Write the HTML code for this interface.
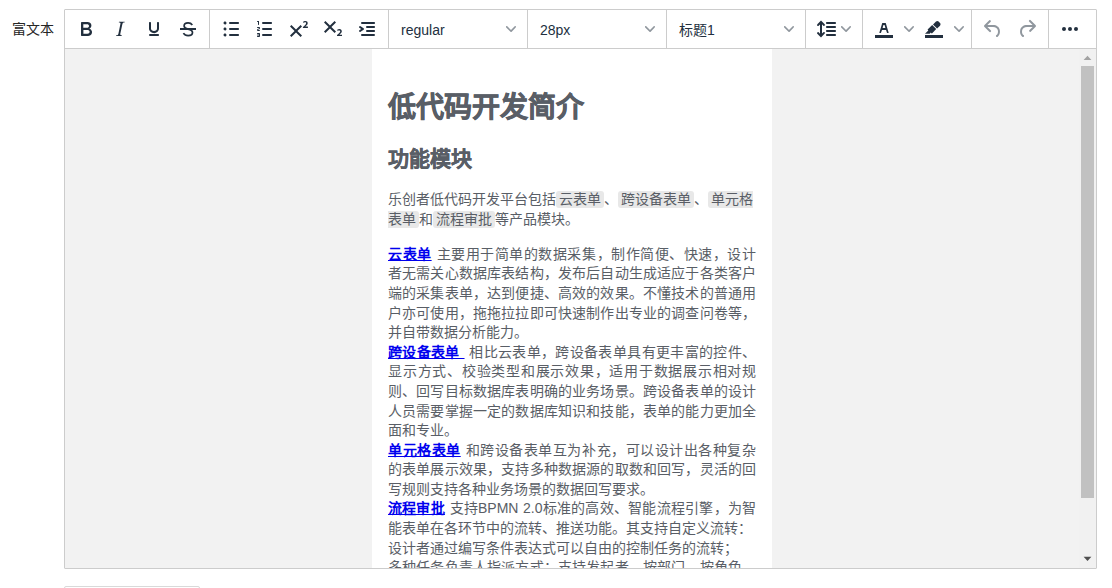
<!DOCTYPE html>
<html lang="zh-CN">
<head>
<meta charset="utf-8">
<style>
*{box-sizing:border-box;}
html,body{margin:0;padding:0;background:#fff;width:1112px;height:588px;overflow:hidden;font-family:"Liberation Sans",sans-serif;}
.label{position:absolute;left:12px;top:20px;font-size:14px;color:#262626;line-height:18px;}
.ed{position:absolute;left:64px;top:9px;width:1033px;height:560px;border:1px solid #ccc;border-radius:1px;overflow:hidden;}
.tb{position:absolute;left:0;top:0;height:39px;width:1031px;border-bottom:1px solid #ccc;background:#fff;display:flex;}
.grp{display:flex;padding:0 4px;border-right:1px solid #ccc;height:39px;}
.grp.last{border-right:0;}
.btn{width:34px;height:34px;margin:2px 0 3px 0;display:flex;align-items:center;justify-content:center;}
.btn svg{width:24px;height:24px;fill:#222f3e;display:block;}
.btn.dis svg{fill:rgba(34,47,62,.5);}
.sel{width:130px;height:34px;margin:2px 0 3px;padding:0 4px;display:flex;align-items:center;}
.sel .lab{width:98px;margin:0 4px;position:relative;top:1px;font-size:14px;color:#222f3e;white-space:nowrap;line-height:34px;}
.chev{width:16px;height:34px;display:flex;align-items:center;justify-content:center;}
.chev svg{width:10px;height:10px;fill:rgba(34,47,62,.5);display:block;}
.lh{width:48px;height:34px;margin:2px 0 3px;padding:0 4px;display:flex;align-items:center;}
.lh svg.ic{width:24px;height:24px;fill:#222f3e;display:block;}
.split{display:flex;width:50px;height:34px;margin:2px 0 3px;}
.split .main{width:34px;height:34px;display:flex;align-items:center;justify-content:center;}
.split .main svg{width:24px;height:24px;fill:#222f3e;display:block;}
.frame{position:absolute;left:0;top:39px;width:1031px;height:519px;background:#f2f2f2;overflow:hidden;}
.page{position:absolute;left:307px;top:0;width:400px;height:2000px;background:#fff;padding:16px;font-size:14px;line-height:1.4;color:#595e66;text-align:justify;word-spacing:0.5px;}
.page h1{font-size:28px;margin:23px 0 0;font-weight:bold;-webkit-text-stroke:0.6px #595e66;}
.page h2{font-size:21px;margin:16.4px 0 16.6px;font-weight:bold;-webkit-text-stroke:0.4px #595e66;}
.page p{margin:14px 0;}
.page code{font-family:"Liberation Mono",monospace;background:#e8e8e8;border-radius:3px;padding:1px 3px 0;font-size:14px;}
.page a{color:#0000ee;text-decoration:underline;}
.sb{position:absolute;left:1014px;top:0;width:17px;height:519px;background:#f1f1f1;}
.thumb{position:absolute;left:2px;top:17px;width:13px;height:432px;background:#c1c1c1;}
.up{position:absolute;left:5px;top:7px;width:0;height:0;border-left:3.5px solid transparent;border-right:3.5px solid transparent;border-bottom:4px solid #a3a3a3;}
.down{position:absolute;left:5px;top:508px;width:0;height:0;border-left:3.5px solid transparent;border-right:3.5px solid transparent;border-top:4px solid #505050;}
.bottombox{position:absolute;left:64px;top:586px;width:136px;height:20px;border:1px solid #d9d9d9;border-radius:2px;}
</style>
</head>
<body>
<div class="label">富文本</div>
<div class="ed">
  <div class="tb">
    <div class="grp">
      <div class="btn"><svg viewBox="0 0 24 24"><path d="M7.8 19c-.3 0-.5 0-.6-.2l-.2-.5V5.7c0-.2 0-.4.2-.5l.6-.2h5c1.5 0 2.7.3 3.5 1 .7.6 1.1 1.4 1.1 2.5a3 3 0 0 1-.6 1.9c-.4.6-1 1-1.6 1.2.4.1.9.3 1.3.6s.8.7 1 1.2c.4.4.5 1 .5 1.6 0 1.3-.4 2.3-1.3 3-.8.7-2.1 1-3.8 1H7.8zm5-8.3c.6 0 1.2-.1 1.6-.5.4-.3.6-.7.6-1.3 0-1.1-.8-1.7-2.3-1.7H9.3v3.5h3.4zm.5 6c.7 0 1.3-.1 1.7-.4.4-.4.6-.9.6-1.5s-.2-1-.7-1.4c-.4-.3-1-.4-2-.4H9.4v3.8h4z" fill-rule="evenodd"/></svg></div>
      <div class="btn"><svg viewBox="0 0 24 24"><path d="M16.7 4.7l-.1.9h-.3c-.6 0-1 0-1.4.3-.3.3-.4.6-.5 1.1l-2.1 9.8v.6c0 .5.4.8 1.4.8h.2l-.2.8H8l.2-.8h.2c1.1 0 1.8-.5 2-1.5l2-9.8.1-.5c0-.6-.4-.8-1.4-.8h-.3l.2-.9h5.8z" fill-rule="evenodd"/></svg></div>
      <div class="btn"><svg viewBox="0 0 24 24"><path d="M16 5c.6 0 1 .4 1 1v5.5a4 4 0 0 1-.4 1.8l-1 1.4a5.3 5.3 0 0 1-5.5 1 5 5 0 0 1-1.6-1c-.5-.4-.8-.9-1.1-1.4a4 4 0 0 1-.4-1.8V6c0-.6.4-1 1-1s1 .4 1 1v5.5c0 .3 0 .6.2 1l.6.7a3.3 3.3 0 0 0 2.2.8 3.4 3.4 0 0 0 2.2-.8c.3-.2.4-.5.6-.8l.2-.9V6c0-.6.4-1 1-1zM8 17h8c.6 0 1 .4 1 1s-.4 1-1 1H8a1 1 0 0 1 0-2z" fill-rule="evenodd"/></svg></div>
      <div class="btn"><svg viewBox="0 0 24 24"><path d="M16.3 8C15.4 6.6 13.9 5.9 12.1 5.9 9.7 5.9 8.1 7.2 8.1 9 8.1 11 10 11.6 12.1 12.1 14.6 12.7 16.5 13.6 16.5 15.5 16.5 17.4 14.6 18.6 12.1 18.6 10 18.6 8.4 17.7 7.4 16.1" fill="none" stroke="#222f3e" stroke-width="1.7"/><path d="M4 11h16v2H4z"/></svg></div>
    </div>
    <div class="grp">
      <div class="btn"><svg viewBox="0 0 24 24"><path d="M11 5h8c.6 0 1 .4 1 1s-.4 1-1 1h-8a1 1 0 0 1 0-2zm0 6h8c.6 0 1 .4 1 1s-.4 1-1 1h-8a1 1 0 0 1 0-2zm0 6h8c.6 0 1 .4 1 1s-.4 1-1 1h-8a1 1 0 0 1 0-2zM4.5 6c0-.4.1-.8.4-1 .3-.4.7-.5 1.1-.5.4 0 .8.1 1 .4.4.3.5.7.5 1.1 0 .4-.1.8-.4 1-.3.4-.7.5-1.1.5-.4 0-.8-.1-1-.4-.4-.3-.5-.7-.5-1.1zm0 6c0-.4.1-.8.4-1 .3-.4.7-.5 1.1-.5.4 0 .8.1 1 .4.4.3.5.7.5 1.1 0 .4-.1.8-.4 1-.3.4-.7.5-1.1.5-.4 0-.8-.1-1-.4-.4-.3-.5-.7-.5-1.1zm0 6c0-.4.1-.8.4-1 .3-.4.7-.5 1.1-.5.4 0 .8.1 1 .4.4.3.5.7.5 1.1 0 .4-.1.8-.4 1-.3.4-.7.5-1.1.5-.4 0-.8-.1-1-.4-.4-.3-.5-.7-.5-1.1z" fill-rule="evenodd"/></svg></div>
      <div class="btn"><svg viewBox="0 0 24 24"><path d="M10 17h8c.6 0 1 .4 1 1s-.4 1-1 1h-8a1 1 0 0 1 0-2zm0-6h8c.6 0 1 .4 1 1s-.4 1-1 1h-8a1 1 0 0 1 0-2zm0-6h8c.6 0 1 .4 1 1s-.4 1-1 1h-8a1 1 0 1 1 0-2zM6 4v3.5c0 .3-.2.5-.5.5a.5.5 0 0 1-.5-.5V5h-.5a.5.5 0 0 1 0-1H6zm-1 8.8l.2.2h1.3c.3 0 .5.2.5.5s-.2.5-.5.5H4.9a1 1 0 0 1-.9-1V13c0-.4.3-.8.6-1l1.2-.4.2-.3a.2.2 0 0 0-.2-.2H4.5a.5.5 0 0 1-.5-.5c0-.3.2-.5.5-.5h1.6c.5 0 .9.4.9 1v.1c0 .4-.3.8-.6 1l-1.2.4-.2.3zM7 17v2c0 .6-.4 1-1 1H4.5a.5.5 0 0 1 0-1h1.2c.2 0 .3-.1.3-.3 0-.2-.1-.3-.3-.3H4.4a.4.4 0 1 1 0-.8h1.3c.2 0 .3-.1.3-.3 0-.2-.1-.3-.3-.3H4.5a.5.5 0 1 1 0-1H6c.6 0 1 .4 1 1z" fill-rule="evenodd"/></svg></div>
      <div class="btn"><svg viewBox="0 0 24 24"><path d="M15 9.4L10.4 14l4.6 4.6-1.4 1.4L9 15.4 4.4 20 3 18.6 7.6 14 3 9.4 4.4 8 9 12.6 13.6 8 15 9.4zm5.9 1.6h-5v-1l1-.8 1.7-1.6c.3-.5.5-.9.5-1.3 0-.3 0-.5-.2-.7-.2-.2-.5-.3-.9-.3l-.8.2-.7.4-.4-1.2c.2-.2.5-.4 1-.5.3-.2.8-.2 1.2-.2.8 0 1.4.2 1.8.6.4.4.6 1 .6 1.6 0 .5-.2 1-.5 1.5l-1.3 1.4-.6.5h2.6V11z"/></svg></div>
      <div class="btn"><svg viewBox="0 0 24 24"><path d="M10.4 10l4.6 4.6-1.4 1.4L9 11.4 4.4 16 3 14.6 7.6 10 3 5.4 4.4 4 9 8.6 13.6 4 15 5.4 10.4 10zM21 19h-5v-1l1-.8 1.7-1.6c.3-.4.5-.8.5-1.2 0-.3 0-.6-.2-.7-.2-.2-.5-.3-1-.3l-.7.1-.7.4-.4-1.1 1-.6 1.2-.2c.8 0 1.4.3 1.8.7.4.4.6.9.6 1.5 0 .5-.1 1-.5 1.5l-1.2 1.4-.7.6h2.6V19z"/></svg></div>
      <div class="btn"><svg viewBox="0 0 24 24"><path d="M7 5h12c.6 0 1 .4 1 1s-.4 1-1 1H7a1 1 0 1 1 0-2zm5 4h7c.6 0 1 .4 1 1s-.4 1-1 1h-7a1 1 0 0 1 0-2zm0 4h7c.6 0 1 .4 1 1s-.4 1-1 1h-7a1 1 0 0 1 0-2zm-5 4h12a1 1 0 0 1 0 2H7a1 1 0 0 1 0-2zm-2.6-3.8L6.2 12l-1.8-1.2a1 1 0 0 1 1.2-1.6l3 2a1 1 0 0 1 0 1.6l-3 2a1 1 0 1 1-1.2-1.6z" fill-rule="evenodd"/></svg></div>
    </div>
    <div class="grp">
      <div class="sel"><div class="lab">regular</div><div class="chev"><svg viewBox="0 0 10 10"><path d="M8.7 2.2c.3-.3.8-.3 1 0 .4.4.4.9 0 1.2L5.7 7.8c-.3.3-.9.3-1.2 0L.2 3.4a.8.8 0 0 1 0-1.2c.3-.3.8-.3 1.1 0L5 6l3.7-3.8z"/></svg></div></div>
    </div>
    <div class="grp">
      <div class="sel"><div class="lab">28px</div><div class="chev"><svg viewBox="0 0 10 10"><path d="M8.7 2.2c.3-.3.8-.3 1 0 .4.4.4.9 0 1.2L5.7 7.8c-.3.3-.9.3-1.2 0L.2 3.4a.8.8 0 0 1 0-1.2c.3-.3.8-.3 1.1 0L5 6l3.7-3.8z"/></svg></div></div>
    </div>
    <div class="grp">
      <div class="sel"><div class="lab">标题1</div><div class="chev"><svg viewBox="0 0 10 10"><path d="M8.7 2.2c.3-.3.8-.3 1 0 .4.4.4.9 0 1.2L5.7 7.8c-.3.3-.9.3-1.2 0L.2 3.4a.8.8 0 0 1 0-1.2c.3-.3.8-.3 1.1 0L5 6l3.7-3.8z"/></svg></div></div>
    </div>
    <div class="grp">
      <div class="lh"><svg class="ic" viewBox="0 0 24 24"><path d="M21 5a1 1 0 0 1 .1 2H13a1 1 0 0 1-.1-2H21zm0 4a1 1 0 0 1 .1 2H13a1 1 0 0 1-.1-2H21zm0 4a1 1 0 0 1 .1 2H13a1 1 0 0 1-.1-2H21zm0 4a1 1 0 0 1 .1 2H13a1 1 0 0 1-.1-2H21zM7 3.6l3.7 3.7a1 1 0 0 1-1.3 1.5h-.1L8 7.3v9.2l1.3-1.3a1 1 0 0 1 1.3 0h.1c.4.4.4 1 0 1.3v.1L7 20.4l-3.7-3.7a1 1 0 0 1 1.3-1.5h.1L6 16.7V7.4L4.7 8.7a1 1 0 0 1-1.3 0h-.1a1 1 0 0 1 0-1.3v-.1L7 3.6z"/></svg><div class="chev"><svg viewBox="0 0 10 10"><path d="M8.7 2.2c.3-.3.8-.3 1 0 .4.4.4.9 0 1.2L5.7 7.8c-.3.3-.9.3-1.2 0L.2 3.4a.8.8 0 0 1 0-1.2c.3-.3.8-.3 1.1 0L5 6l3.7-3.8z"/></svg></div></div>
    </div>
    <div class="grp">
      <div class="split"><div class="main"><svg viewBox="0 0 24 24"><g fill-rule="evenodd"><path d="M3 18h18v3H3z"/><path d="M8.7 16h-.8a.5.5 0 0 1-.5-.6l2.7-9c.1-.3.3-.4.5-.4h2.8c.2 0 .4.1.5.4l2.7 9a.5.5 0 0 1-.5.6h-.8a.5.5 0 0 1-.4-.4l-.7-2.2c0-.3-.3-.4-.5-.4h-3.4c-.2 0-.4.1-.5.4l-.7 2.2c0 .3-.2.4-.4.4zm2.6-7.6l-.6 2a.5.5 0 0 0 .5.6h1.6a.5.5 0 0 0 .5-.6l-.6-2c0-.3-.3-.4-.5-.4h-.4c-.2 0-.4.1-.5.4z"/></g></svg></div><div class="chev"><svg viewBox="0 0 10 10"><path d="M8.7 2.2c.3-.3.8-.3 1 0 .4.4.4.9 0 1.2L5.7 7.8c-.3.3-.9.3-1.2 0L.2 3.4a.8.8 0 0 1 0-1.2c.3-.3.8-.3 1.1 0L5 6l3.7-3.8z"/></svg></div></div>
      <div class="split"><div class="main"><svg viewBox="0 0 24 24"><g fill-rule="evenodd"><path d="M3 18h18v3H3z"/><path fill-rule="nonzero" d="M7.7 16.7H3l3.3-3.3-.7-.8L10.2 8l4 4.1-4 4.2c-.2.2-.6.2-.8 0l-.6-.7-1.1 1.1zm5-7.5L11 7.4l3-2.9a2 2 0 0 1 2.6 0L18 6c.7.7.7 2 0 2.7l-2.9 2.9-1.8-1.8-.5-.6"/></g></svg></div><div class="chev"><svg viewBox="0 0 10 10"><path d="M8.7 2.2c.3-.3.8-.3 1 0 .4.4.4.9 0 1.2L5.7 7.8c-.3.3-.9.3-1.2 0L.2 3.4a.8.8 0 0 1 0-1.2c.3-.3.8-.3 1.1 0L5 6l3.7-3.8z"/></svg></div></div>
    </div>
    <div class="grp">
      <div class="btn dis"><svg viewBox="0 0 24 24"><path d="M6.4 8H12c3.7 0 6.2 2 6.8 5.1.6 2.7-.4 5.6-2.3 6.8a1 1 0 0 1-1-1.8c1.1-.6 1.8-2.7 1.4-4.6-.5-2.1-2.1-3.5-4.9-3.5H6.4l3.3 3.3a1 1 0 1 1-1.4 1.4l-5-5a1 1 0 0 1 0-1.4l5-5a1 1 0 0 1 1.4 1.4L6.4 8z"/></svg></div>
      <div class="btn dis"><svg viewBox="0 0 24 24"><path d="M17.6 10H12c-2.8 0-4.4 1.4-4.9 3.5-.4 2 .3 4 1.4 4.6a1 1 0 1 1-1 1.8c-2-1.2-2.9-4.1-2.3-6.8.6-3 3-5.1 6.8-5.1h5.6l-3.3-3.3a1 1 0 1 1 1.4-1.4l5 5a1 1 0 0 1 0 1.4l-5 5a1 1 0 0 1-1.4-1.4l3.3-3.3z"/></svg></div>
    </div>
    <div class="grp last">
      <div class="btn"><svg viewBox="0 0 24 24"><path d="M6 10a2 2 0 0 0-2 2c0 1.1.9 2 2 2a2 2 0 0 0 2-2 2 2 0 0 0-2-2zm12 0a2 2 0 0 0-2 2c0 1.1.9 2 2 2a2 2 0 0 0 2-2 2 2 0 0 0-2-2zm-6 0a2 2 0 0 0-2 2c0 1.1.9 2 2 2a2 2 0 0 0 2-2 2 2 0 0 0-2-2z"/></svg></div>
    </div>
  </div>
  <div class="frame">
    <div class="page">
<h1>低代码开发简介</h1>
<h2>功能模块</h2>
<p style="text-align:left">乐创者低代码开发平台包括<code>云表单</code>、<code>跨设备表单</code>、<code>单元格表单</code>和<code>流程审批</code>等产品模块。</p>
<p><a><strong>云表单</strong></a> 主要用于简单的数据采集，制作简便、快速，设计者无需关心数据库表结构，发布后自动生成适应于各类客户端的采集表单，达到便捷、高效的效果。不懂技术的普通用户亦可使用，拖拖拉拉即可快速制作出专业的调查问卷等，并自带数据分析能力。<br><a><strong>跨设备表单&nbsp;</strong></a> 相比云表单，跨设备表单具有更丰富的控件、显示方式、校验类型和展示效果，适用于数据展示相对规则、回写目标数据库表明确的业务场景。跨设备表单的设计人员需要掌握一定的数据库知识和技能，表单的能力更加全面和专业。<br><a><strong>单元格表单</strong></a> 和跨设备表单互为补充，可以设计出各种复杂的表单展示效果，支持多种数据源的取数和回写，灵活的回写规则支持各种业务场景的数据回写要求。<br><a><strong>流程审批</strong></a> 支持BPMN 2.0标准的高效、智能流程引擎，为智能表单在各环节中的流转、推送功能。其支持自定义流转：<br>设计者通过编写条件表达式可以自由的控制任务的流转；<br>多种任务负责人指派方式：支持发起者、按部门、按角色、按岗位、按用户等多种方式。</p>
    </div>
    <div class="sb"><svg width="17" height="519" style="position:absolute;left:0;top:0"><polygon points="4.6,11 8.5,6.7 12.4,11" fill="#a3a3a3"/><polygon points="4.6,507.8 12.4,507.8 8.5,512" fill="#505050"/></svg><div class="thumb"></div></div>
  </div>
</div>
<div class="bottombox"></div>
</body>
</html>
